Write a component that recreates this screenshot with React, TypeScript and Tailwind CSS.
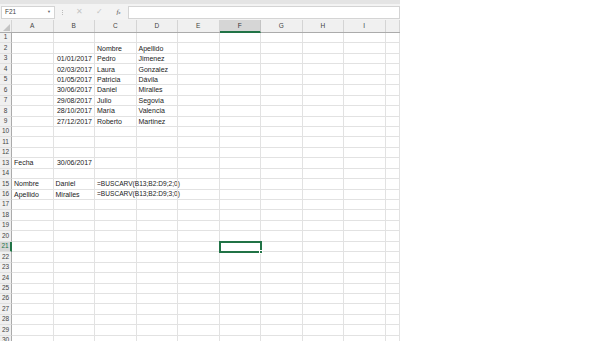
import React from 'react';

const COLS = ['A', 'B', 'C', 'D', 'E', 'F', 'G', 'H', 'I', ''];

type Cell = { text: string; right?: boolean; small?: boolean };
const data: Record<number, Record<string, Cell>> = {
  2: { C: { text: 'Nombre' }, D: { text: 'Apellido' } },
  3: { B: { text: '01/01/2017', right: true }, C: { text: 'Pedro' }, D: { text: 'Jimenez' } },
  4: { B: { text: '02/03/2017', right: true }, C: { text: 'Laura' }, D: { text: 'Gonzalez' } },
  5: { B: { text: '01/05/2017', right: true }, C: { text: 'Patricia' }, D: { text: 'Dávila' } },
  6: { B: { text: '30/06/2017', right: true }, C: { text: 'Daniel' }, D: { text: 'Miralles' } },
  7: { B: { text: '29/08/2017', right: true }, C: { text: 'Julio' }, D: { text: 'Segovia' } },
  8: { B: { text: '28/10/2017', right: true }, C: { text: 'María' }, D: { text: 'Valencia' } },
  9: { B: { text: '27/12/2017', right: true }, C: { text: 'Roberto' }, D: { text: 'Martinez' } },
  13: { A: { text: 'Fecha' }, B: { text: '30/06/2017', right: true } },
  15: { A: { text: 'Nombre' }, B: { text: 'Daniel' }, C: { text: '=BUSCARV(B13;B2:D9;2;0)', small: true } },
  16: { A: { text: 'Apellido' }, B: { text: 'Miralles' }, C: { text: '=BUSCARV(B13;B2:D9;3;0)', small: true } },
};

const grid = 'grid grid-cols-[12px_repeat(9,41.5px)_14px]';

export default function App() {
  const rows = Array.from({ length: 30 }, (_, i) => i + 1);
  return (
    <div className="w-[600px] h-[341px] bg-white overflow-hidden font-['Liberation_Sans',Arial,sans-serif] text-[#222]">
      <div className="w-[400px] h-[341px] overflow-hidden">
        {/* formula bar */}
        <div className="h-[20px] bg-[#f3f3f3] border-t-[4px] border-[#e4e4e4] flex items-center">
          <div className="ml-[1px] w-[54px] h-[13px] bg-white border border-[#d4d4d4] flex items-center justify-between px-[3px]">
            <span className="text-[6.5px] text-[#444]">F21</span>
            <span className="text-[4px] text-[#666]">▼</span>
          </div>
          <div className="w-[14px] flex flex-col items-center gap-[1px]">
            <span className="w-[1px] h-[1px] bg-[#bbb]" />
            <span className="w-[1px] h-[1px] bg-[#bbb]" />
            <span className="w-[1px] h-[1px] bg-[#bbb]" />
          </div>
          <div className="w-[59px] h-[13px] flex items-center">
            <span className="w-[20px] text-center text-[8px] text-[#c4c4c4]">✕</span>
            <span className="w-[20px] text-center text-[8px] text-[#c4c4c4]">✓</span>
            <span className="w-[19px] text-center text-[7px] italic font-['Liberation_Serif',serif] text-[#555]">
              f<span className="text-[5px]">x</span>
            </span>
          </div>
          <div className="flex-1 h-[13px] bg-white border border-[#d4d4d4]" />
        </div>

        {/* column headers */}
        <div className={`${grid} h-[13px] bg-[#f0f0f0] border-b border-[#ababab]`}>
          <div className="relative border-r border-[#d4d4d4]">
            <div className="absolute right-[1px] bottom-[1px] w-0 h-0 border-l-[7px] border-l-transparent border-b-[7px] border-b-[#c4c4c4]" />
          </div>
          {COLS.map((c, i) =>
            c === 'F' ? (
              <div
                key={i}
                className="flex items-center justify-center text-[6.5px] text-[#333] bg-[#d6d6d6] border-r border-[#c4c4c4] border-b-2 border-b-[#217346] -mb-[1px]"
              >
                {c}
              </div>
            ) : (
              <div key={i} className="flex items-center justify-center text-[6.5px] text-[#444] border-r border-[#d4d4d4]">
                {c}
              </div>
            )
          )}
        </div>

        {/* rows */}
        {rows.map((r) => (
          <div key={r} className={`${grid} h-[10.45px]`}>
            <div
              className={`flex items-center justify-center text-[6.5px] leading-none border-b border-[#e0e0e0] ${
                r === 21
                  ? 'bg-[#d6d6d6] border-r-2 border-r-[#217346] text-[#217346]'
                  : 'bg-[#f0f0f0] border-r border-r-[#ababab] text-[#444]'
              }`}
            >
              {r}
            </div>
            {COLS.map((c, i) => {
              const cell = data[r]?.[c];
              const selected = r === 21 && c === 'F';
              return (
                <div
                  key={i}
                  className="relative border-r border-b border-[#e2e2e2] flex items-center px-[2px] overflow-visible"
                >
                  {cell && (
                    <span
                      className={`leading-none whitespace-nowrap ${cell.right ? 'ml-auto' : ''} ${
                        cell.small ? 'text-[6.6px]' : 'text-[7px]'
                      }`}
                    >
                      {cell.text}
                    </span>
                  )}
                  {selected && (
                    <div className="absolute -left-[1px] -top-[1px] w-[43px] h-[12px] border-2 border-[#217346] z-10">
                      <div className="absolute -right-[3px] -bottom-[3px] w-[4px] h-[4px] bg-[#217346] border border-white" />
                    </div>
                  )}
                </div>
              );
            })}
          </div>
        ))}
      </div>
    </div>
  );
}
